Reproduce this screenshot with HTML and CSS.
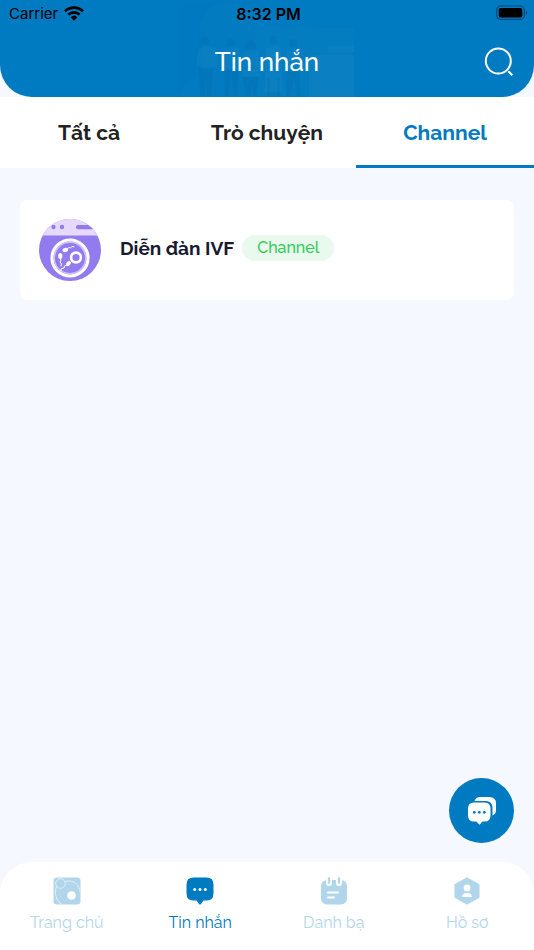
FILE: index.html
```html
<!DOCTYPE html>
<html lang="vi">
<head>
<meta charset="utf-8">
<meta name="viewport" content="width=device-width, initial-scale=1">
<title>Tin nhắn</title>
<link rel="stylesheet" href="styles.css">
</head>
<body>
<div class="app">
  <header class="header">
    <svg class="header-art" viewBox="0 0 174 97" aria-hidden="true">
      <g fill="#fff" opacity=".012">
        <path d="M0 97C4 78 22 78 23 62C23 36 15 30 25 14C37-5 62 2 77 18C89 31 106 26 122 28H174V97Z"/>
        <path d="M66 33q5-3 10-1q5-5 12 0zM110 30q12-8 20-2q12-3 23 2z"/>
      </g>
      <g fill="#fff" opacity=".03">
        <path d="M18 49q10-5 18 0l3 18H16zM45 50q8-4 14 0l3 20H42zM64 51q8-4 14 0l2 26H62zM86 48q8-4 15 0l2 44H84zM107 52q7-3 11 0l2 20h-13zM129 55h45v42h-45zM148 46h26v6h-26z"/>
      </g>
      <g fill="#003d78" opacity=".07">
        <path d="M19 69h14l-2 27h-4l-1-20-1 20h-5zM44 70h14v26h-4l-3-20-2 20h-4zM62 76h17l-3 20h-3v-14l-3 14h-4zM87 78h3v18h-3zM97 78h3v18h-3zM107 69h12l2 27h-4l-3-19-4 19h-4z"/>
        <circle cx="25" cy="41" r="4"/><circle cx="51" cy="43" r="4"/><path d="M65 51q-1-11 5-11 7 0 6 12z"/><circle cx="93" cy="40" r="4"/><circle cx="113" cy="43" r="4"/>
      </g>
    </svg>
    <div class="status">
      <div class="carrier"><span>Carrier</span>
        <svg class="wifi" viewBox="0 0 20 15" aria-hidden="true"><g fill="none" stroke="#000" stroke-width="2.7"><path d="M1 5.2a13 13 0 0 1 18 0M4.3 8.6a8.2 8.2 0 0 1 11.4 0"/></g><path d="M6.6 11.2a5 5 0 0 1 6.800 0L10 14.800Z"/></svg>
      </div>
      <time class="clock">8:32 PM</time>
      <svg class="battery" viewBox="0 0 32 16" aria-hidden="true"><rect x=".7" y="1" width="27.6" height="13.4" rx="4" fill="none" stroke="#00497a" stroke-width="1.200"/><rect x="2.7" y="3" width="23.6" height="9.4" rx="2"/><path d="M29.700 5.300q3 2.400 0 4.800z" fill="#00497a"/></svg>
    </div>
    <div class="title-row">
      <h1 class="title">Tin nhắn</h1>
      <button class="search" type="button" aria-label="Tìm kiếm"><svg viewBox="0 0 30 30" aria-hidden="true"><g fill="none" stroke="#fff" stroke-width="2"><circle cx="14.3" cy="14" r="12.5"/><path d="m24.3 24.3 4 4"/></g></svg></button>
    </div>
  </header>
  <nav class="tabs">
    <a class="tab" href="#all">Tất cả</a>
    <a class="tab" href="#chat">Trò chuyện</a>
    <a class="tab active" href="#channel" aria-current="page">Channel</a>
  </nav>
  <main class="content">
    <a class="card" href="#ivf">
      <svg class="avatar" viewBox="0 0 62 62" aria-hidden="true">
        <clipPath id="round"><circle cx="31" cy="31" r="31"/></clipPath>
        <g clip-path="url(#round)">
          <path fill="#927bef" d="M0 0h62v62H0z"/><path fill="#e6d9fc" d="M0 0h62v16.500H0z"/>
          <circle cx="14.500" cy="8" r="2.200" fill="#927bef"/><circle cx="23" cy="8" r="2.200" fill="#927bef"/><rect x="37" y="6" width="20" height="4.200" rx="2" fill="#927bef"/>
          <circle cx="31" cy="39" r="18" fill="none" stroke="#fff" stroke-width="3.200"/><circle cx="31" cy="39" r="15.700" fill="#927bef" stroke="#cdc2f8" stroke-width="1.400"/>
          <circle cx="37" cy="38.500" r="4.900" fill="#927bef" stroke="#fff" stroke-width="2.600"/>
          <g fill="#fff"><ellipse cx="26.300" cy="31" rx="2.800" ry="2.100" transform="rotate(-15 26.300 31)"/><ellipse cx="21.300" cy="37" rx="2.100" ry="2.900"/><ellipse cx="29.500" cy="44.500" rx="2.800" ry="2" transform="rotate(-45 29.500 44.500)"/></g>
          <path d="m28 30 2-1.500 1.500.5 1.500-1.500 2 .3M21 39l1 2-1 2 1.500 2-.5 2M28 46l-2.500 1-.5 2-2.500.5-.5 2" fill="none" stroke="#fff" stroke-width="1" stroke-linecap="round"/>
        </g>
      </svg>
      <div class="label">
        <h2 class="name">Diễn đàn IVF</h2>
        <span class="badge">Channel</span>
      </div>
    </a>
  </main>
  <button class="compose" type="button" aria-label="Tin nhắn mới"><svg viewBox="0 0 28 28" aria-hidden="true"><path fill="#fff" d="M6.500 4Q8 0 12 0h9.500q6.500 0 6.500 6.500V13q0 4-3.500 5.500V11q0-7-7-7zM6 5.500h10.500q6 0 6 6v7q0 6-6 6h-2l-3 3.200L8.300 24.500H6q-6 0-6-6v-7q0-6 6-6z"/><g fill="#007ac0"><circle cx="6.300" cy="15.300" r="1.400"/><circle cx="11.300" cy="15.300" r="1.400"/><circle cx="16.300" cy="15.300" r="1.400"/></g></svg></button>
  <nav class="bottom">
    <a class="item" href="#home">
      <svg viewBox="0 0 28 28" aria-hidden="true"><rect x=".5" y=".5" width="27" height="27" rx="3.500" fill="#b1d6eb"/><g fill="none" stroke="#e0f0f8" stroke-width="1"><circle cx="7.500" cy="6.500" r="4.800"/><path d="M12 4.500C20 2 27 8 27 15M3.500 9.500C1 16 3 24 9 27.500"/></g><circle cx="18.500" cy="18.500" r="4.300" fill="#fff"/></svg>
      <span>Trang chủ</span></a>
    <a class="item active" href="#messages" aria-current="page">
      <svg viewBox="0 0 28 28" aria-hidden="true"><path fill="#007ac0" d="M7.500.5h13q7 0 7 7v9q0 7-7 7h-3l-2.500 3.500q-1 1-2 0l-2.500-3.500h-3q-7 0-7-7v-9q0-7 7-7z"/><g fill="#fff"><circle cx="8.700" cy="12.500" r="1.500"/><circle cx="14" cy="12.500" r="1.500"/><circle cx="19.300" cy="12.500" r="1.500"/></g></svg>
      <span>Tin nhắn</span></a>
    <a class="item" href="#contacts">
      <svg viewBox="0 0 28 28" aria-hidden="true"><rect x="1" y="3" width="26" height="24.500" rx="6" fill="#b1d6eb"/><path d="M9 0v6M19 0v6" stroke="#fff" stroke-width="6" stroke-linecap="round"/><path d="M9 1.500v4M19 1.500v4" stroke="#b1d6eb" stroke-width="2.400" stroke-linecap="round"/><path d="M8 15.500h10M8 20.500h6" stroke="#fff" stroke-width="2" stroke-linecap="round"/></svg>
      <span>Danh bạ</span></a>
    <a class="item" href="#profile">
      <svg viewBox="0 0 28 28" aria-hidden="true"><path fill="#b1d6eb" stroke="#b1d6eb" stroke-width="3" stroke-linejoin="round" d="m14 2 11 6v12l-11 6-11-6V8z"/><g fill="#fff"><circle cx="14" cy="11" r="3.400"/><path d="M9 20q0-4 5-4t5 4z"/></g></svg>
      <span>Hồ sơ</span></a>
  </nav>
</div>
</body>
</html>
```
FILE: styles.css
```css
* { box-sizing: border-box; }
body { margin: 0; background: #f5f9ff; font-family: Raleway, Lato, "Open Sans", sans-serif; }
h1, h2 { margin: 0; }
a { color: inherit; text-decoration: none; }
button { display: grid; place-items: center; padding: 0; border: 0; cursor: pointer; }
svg { display: block; }
.app { display: flex; flex-direction: column; min-height: 100vh; }
.header { position: relative; overflow: hidden; padding-bottom: 16px; border-radius: 0 0 32px 32px; background: #007ac0; }
.header-art { position: absolute; bottom: 0; left: 50%; width: 174px; margin-left: -87px; }
.status { position: relative; display: grid; grid-template-columns: 1fr auto 1fr; align-items: center; height: 28px; padding: 0 6px 0 9px; font: 15px/20px Inter, sans-serif; }
.carrier { display: flex; align-items: center; gap: 6px; }
.wifi { width: 20px; height: 15px; margin-bottom: 2px; }
.clock { font-size: 16px; font-weight: 600; }
.battery { width: 32px; height: 16px; margin-bottom: 2px; justify-self: end; }
.title-row { position: relative; display: grid; grid-template-columns: 30px 1fr 30px; align-items: center; height: 53px; padding: 14px 20px 0; }
.title { grid-column: 2; color: #fff; font-size: 26px; font-weight: 500; line-height: 36px; text-align: center; }
.search { width: 30px; height: 30px; background: none; }
.search svg { width: 30px; height: 30px; }
.tabs { display: grid; grid-template-columns: repeat(3, 1fr); background: #fff; }
.tab { padding: 23px 0 19px; border-bottom: 3px solid transparent; color: #222; font-size: 21px; font-weight: 700; line-height: 26px; text-align: center; }
.tab.active { border-color: #007ac0; color: #007ac0; }
.content { flex: 1; padding: 32px 20px; }
.card { display: flex; align-items: center; padding: 19px; border-radius: 8px; background: #fff; }
.avatar { width: 62px; height: 62px; }
.label { display: flex; flex-wrap: wrap; align-items: center; gap: 8px; padding: 0 0 4px 19px; }
.name { color: #171a30; font-size: 19px; font-weight: 700; line-height: 26px; }
.badge { padding: 0 15px; border-radius: 13px; background: #e9f9ee; color: #32cc58; font-size: 16px; font-weight: 500; line-height: 26px; }
.compose { align-self: flex-end; width: 65px; height: 65px; margin: 0 20px 19px 0; border-radius: 50%; background: #007ac0; }
.compose svg { width: 28px; height: 28px; }
.bottom { display: grid; grid-template-columns: repeat(4, 1fr); padding: 15px 0 16px; border-radius: 32px 32px 0 0; background: #fff; }
.item { display: flex; flex-direction: column; align-items: center; gap: 7px; color: #b1d6eb; font-size: 16px; line-height: 22px; }
.item svg { width: 28px; height: 28px; }
.item.active { color: #007ac0; }
```
